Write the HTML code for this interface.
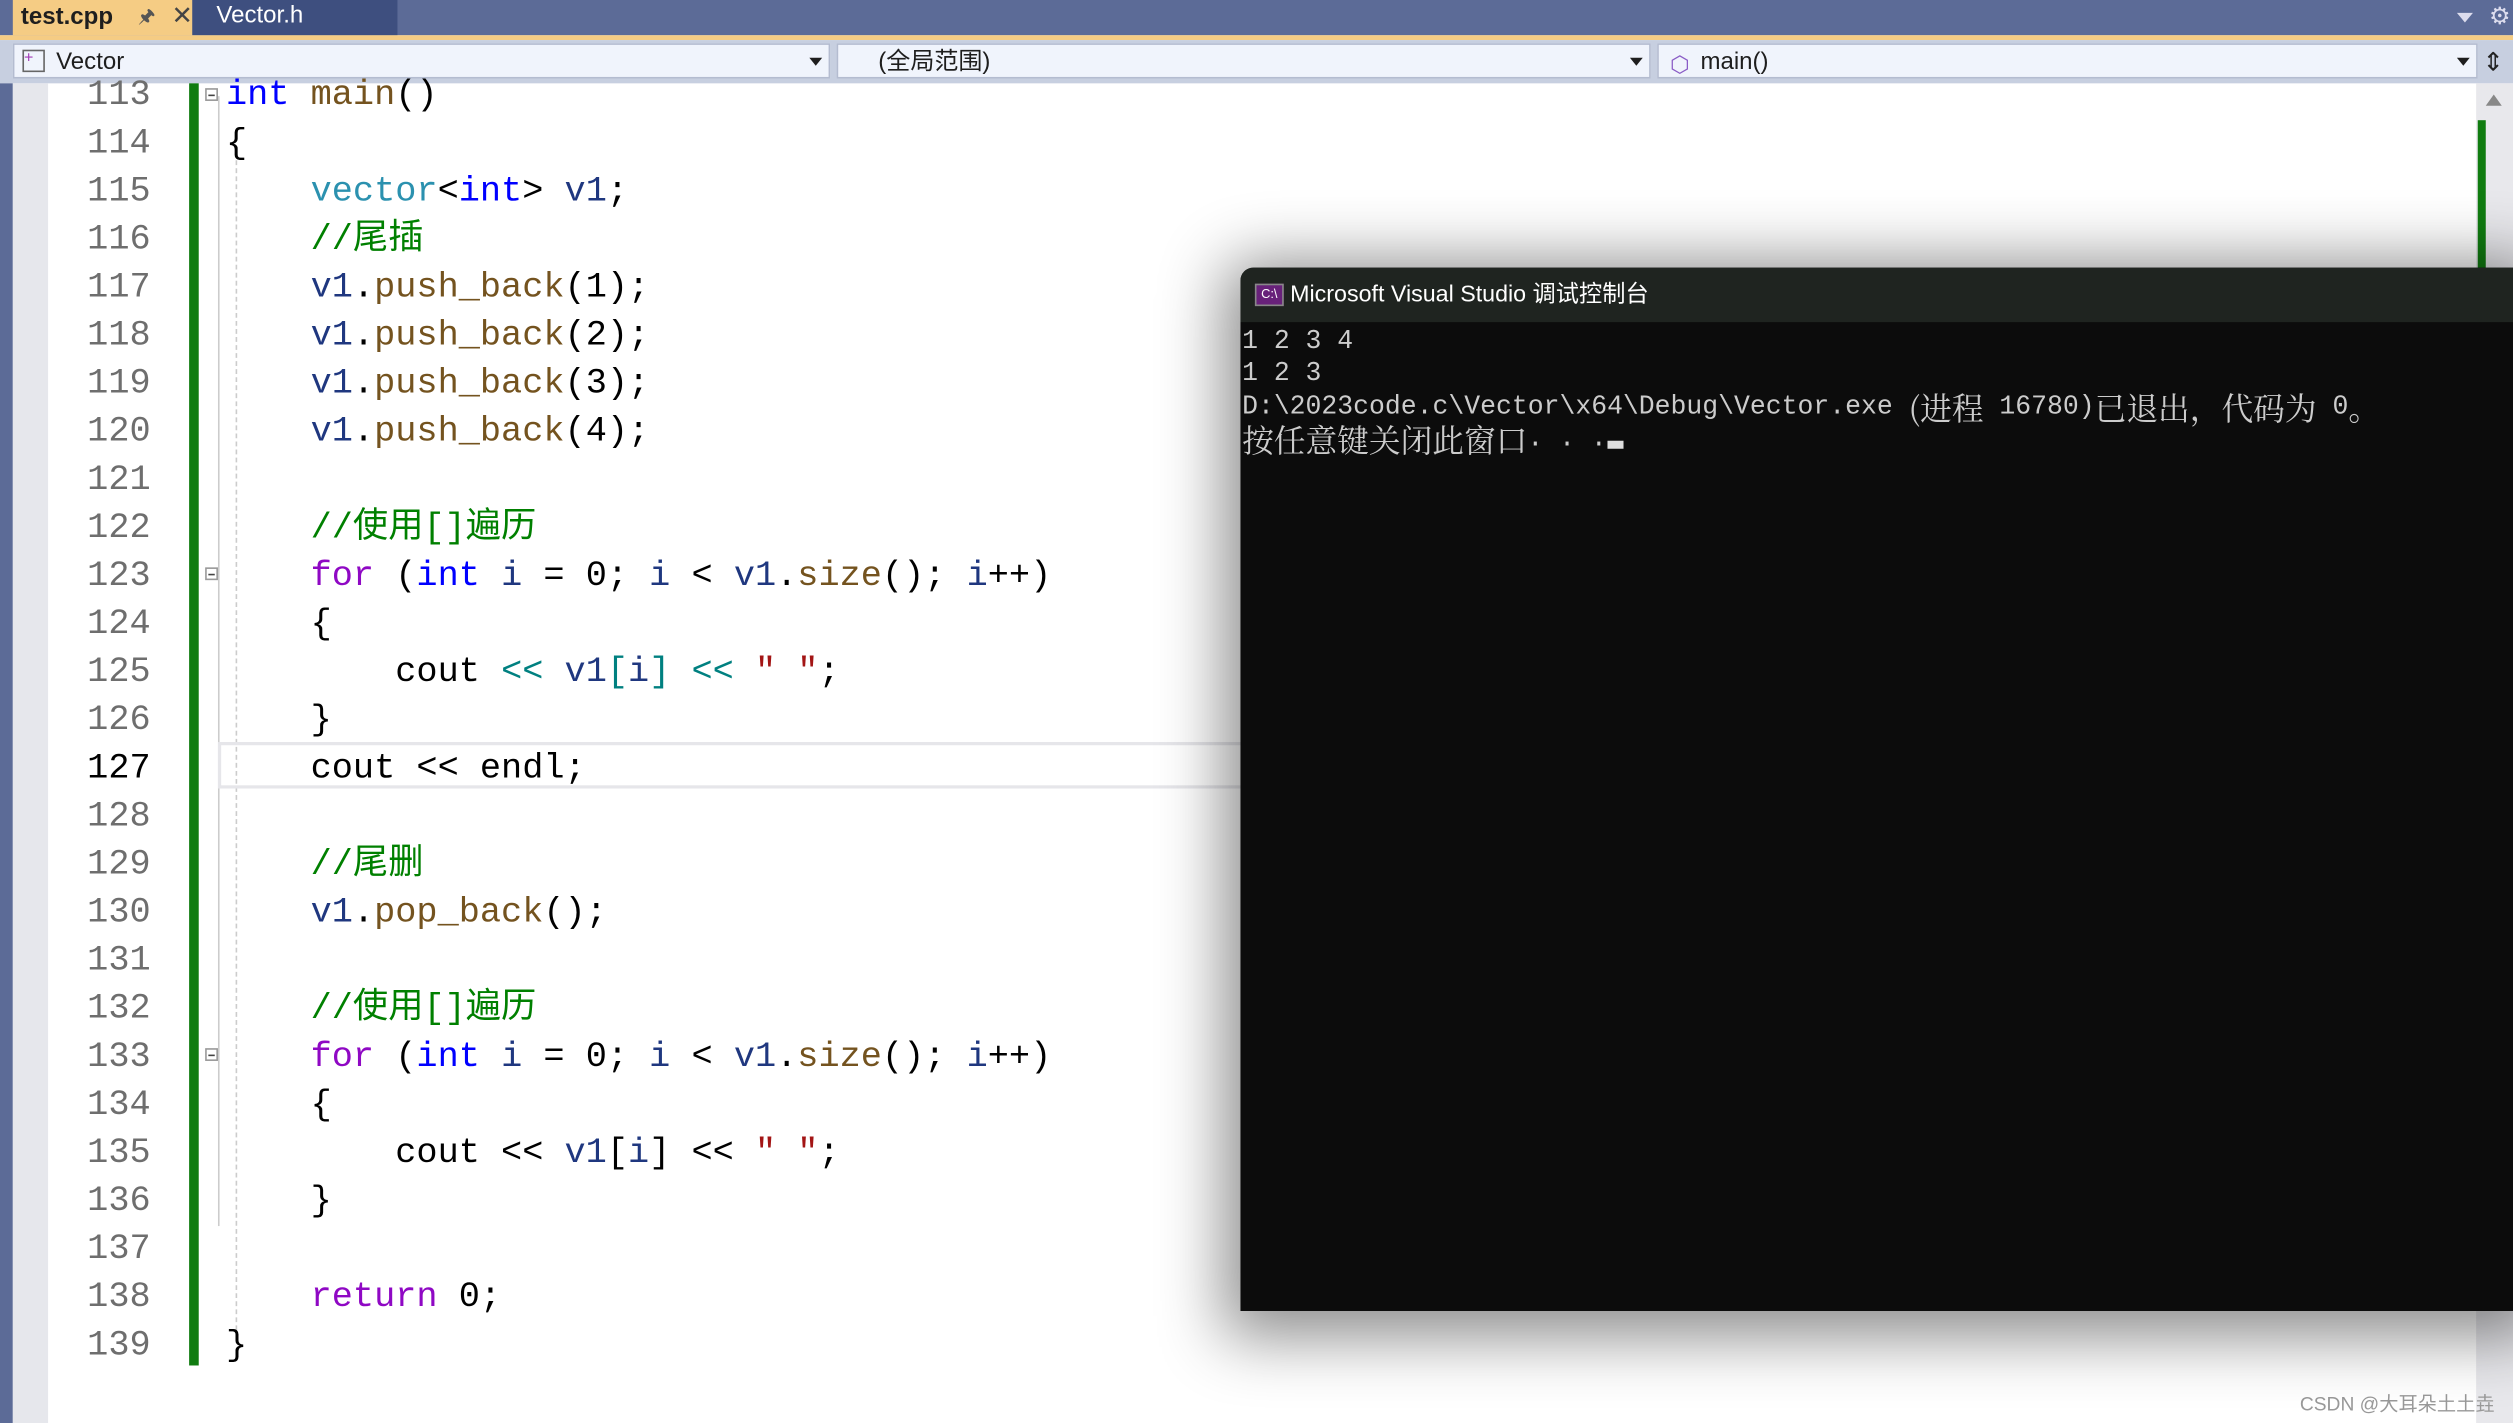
<!DOCTYPE html>
<html><head><meta charset="utf-8">
<style>
html,body{margin:0;padding:0;width:2513px;height:1423px;overflow:hidden;background:#fff}
#w{position:absolute;left:0;top:0;width:1568px;height:888px;transform:scale(1.60268);transform-origin:0 0;overflow:hidden;background:#fff;font-family:"Liberation Sans","Noto Sans CJK SC",sans-serif}
.abs{position:absolute}
#tabs{left:0;top:0;width:1568px;height:22px;background:#5c6b97}
#t1{left:8px;top:0;width:112px;height:22px;background:#f5cc84;font-weight:bold;font-size:15px;line-height:21px;color:#1e1e1e}
#t2{left:120px;top:0;width:128px;height:22px;background:#3e4f7f;color:#fff;font-size:15px;line-height:20px}
#oline{left:0;top:22px;width:1568px;height:3px;background:#f5cc84}
#tool{left:0;top:25px;width:1568px;height:27px;background:#c7cfe0}
.dd{position:absolute;top:27px;height:22px;background:#f0f4fc;border:1px solid #b4bcd0;box-sizing:border-box;font-size:15px;line-height:21px;color:#1e1e1e}
.arr{position:absolute;right:4px;top:8px;width:0;height:0;border-left:4px solid transparent;border-right:4px solid transparent;border-top:5px solid #1e1e1e}
#lstrip{left:0;top:52px;width:8px;height:836px;background:#5c6b97}
#gm{left:8px;top:52px;width:22px;height:836px;background:#e6e7ec}
#green{left:118px;top:52px;width:6px;height:800px;background:#107c10}
#vs{left:1545px;top:52px;width:23px;height:836px;background:#e8e8ec}
.ln{position:absolute;left:30px;width:64px;text-align:right;font-family:"Liberation Mono",monospace;font-size:22px;color:#6e6e6e;line-height:30px;margin-top:1px}
.cd{position:absolute;left:141px;white-space:pre;font-family:"Liberation Mono","Noto Sans CJK SC",monospace;font-size:22px;line-height:30px;color:#000;margin-top:1px}
.k{color:#0000ff}.p{color:#8f08c4}.t{color:#2b91af}.v{color:#1f377f}.f{color:#74531f}.c{color:#008000}.s{color:#a31515}.o{color:#008080}
.fold{position:absolute;left:128px;width:8px;height:8px;border:1px solid #999;background:#fff;box-sizing:border-box}
.fold:after{content:"";position:absolute;left:1px;top:3px;width:4px;height:1px;background:#444}
#con{left:774px;top:167px;width:800px;height:651px;background:#0c0c0c;border-radius:8px 0 0 0;box-shadow:0 6px 40px 10px rgba(0,0,0,.45);overflow:hidden}
#ctitle{left:0;top:0;width:800px;height:34px;background:#1f2420;color:#fff;font-size:14.5px;line-height:34px}
.cl{position:absolute;left:1px;white-space:pre;font-family:"Liberation Mono",monospace;font-size:16.5px;color:#cccccc;line-height:20px;height:20px}
.z{font-family:"Noto Serif CJK SC","Noto Sans CJK SC",serif;font-size:19.8px;line-height:20px;vertical-align:top}
</style></head><body><div id="w">
<div id="tabs" class="abs"></div>
<div id="t1" class="abs"><span style="position:absolute;left:5px">test.cpp</span><span style="position:absolute;left:78px;font-weight:normal;font-size:12px;color:#555">&#x1F588;</span><span style="position:absolute;left:99px;font-weight:normal;font-size:16px;color:#444">✕</span></div>
<div id="t2" class="abs"><span style="position:absolute;left:15px">Vector.h</span></div>
<div class="abs" style="left:1533px;top:8px;border-left:5px solid transparent;border-right:5px solid transparent;border-top:6px solid #dde;width:0;height:0"></div>
<div class="abs" style="left:1553px;top:1px;color:#dde;font-size:15px">⚙</div>
<div id="oline" class="abs"></div>
<div id="tool" class="abs"></div>
<div class="dd" style="left:8px;width:510px"><span style="position:absolute;left:5px;top:3px;width:14px;height:14px;border:1px solid #666;box-sizing:border-box;color:#a23bb5;font-size:10px;line-height:10px">+</span><span style="position:absolute;left:26px">Vector</span><div class="arr"></div></div>
<div class="dd" style="left:522px;width:508px"><span style="position:absolute;left:25px">(全局范围)</span><div class="arr"></div></div>
<div class="dd" style="left:1034px;width:512px"><span style="position:absolute;left:7px;top:2px;color:#8a5cc6;font-size:14px">⬡</span><span style="position:absolute;left:26px">main()</span><div class="arr"></div></div>
<div class="abs" style="left:1549px;top:29px;font-size:16px;color:#222">⇕</div>
<div id="lstrip" class="abs"></div>
<div id="gm" class="abs"></div>
<div id="green" class="abs"></div>
<div class="abs" style="left:136px;top:60px;width:1px;height:705px;background:#ccc"></div>
<div class="abs" style="left:147px;top:100px;width:0;height:735px;border-left:1px dashed #ccc"></div>
<div class="abs" style="left:136px;top:463px;width:640px;height:29px;border:2px solid #e6e6ea;box-sizing:border-box"></div>
<div id="vs" class="abs"><div class="abs" style="left:6px;top:7px;border-left:5px solid transparent;border-right:5px solid transparent;border-bottom:7px solid #888;width:0;height:0"></div><div class="abs" style="left:1px;top:23px;width:5px;height:93px;background:#107c10"></div></div>
<div class="fold" style="top:55px"></div><div class="fold" style="top:354px"></div><div class="fold" style="top:654px"></div>

<div class="ln" style="top:44px">113</div><div class="ln" style="top:74px">114</div><div class="ln" style="top:104px">115</div><div class="ln" style="top:134px">116</div><div class="ln" style="top:164px">117</div><div class="ln" style="top:194px">118</div><div class="ln" style="top:224px">119</div><div class="ln" style="top:254px">120</div><div class="ln" style="top:284px">121</div><div class="ln" style="top:314px">122</div><div class="ln" style="top:344px">123</div><div class="ln" style="top:374px">124</div><div class="ln" style="top:404px">125</div><div class="ln" style="top:434px">126</div><div class="ln" style="top:464px;color:#000">127</div><div class="ln" style="top:494px">128</div><div class="ln" style="top:524px">129</div><div class="ln" style="top:554px">130</div><div class="ln" style="top:584px">131</div><div class="ln" style="top:614px">132</div><div class="ln" style="top:644px">133</div><div class="ln" style="top:674px">134</div><div class="ln" style="top:704px">135</div><div class="ln" style="top:734px">136</div><div class="ln" style="top:764px">137</div><div class="ln" style="top:794px">138</div><div class="ln" style="top:824px">139</div>

<div class="cd" style="top:44px"><span class="k">int</span> <span class="f">main</span>()</div>
<div class="cd" style="top:74px">{</div>
<div class="cd" style="top:104px">    <span class="t">vector</span>&lt;<span class="k">int</span>&gt; <span class="v">v1</span>;</div>
<div class="cd" style="top:134px">    <span class="c">//尾插</span></div>
<div class="cd" style="top:164px">    <span class="v">v1</span>.<span class="f">push_back</span>(1);</div>
<div class="cd" style="top:194px">    <span class="v">v1</span>.<span class="f">push_back</span>(2);</div>
<div class="cd" style="top:224px">    <span class="v">v1</span>.<span class="f">push_back</span>(3);</div>
<div class="cd" style="top:254px">    <span class="v">v1</span>.<span class="f">push_back</span>(4);</div>
<div class="cd" style="top:314px">    <span class="c">//使用[]遍历</span></div>
<div class="cd" style="top:344px">    <span class="p">for</span> (<span class="k">int</span> <span class="v">i</span> = 0; <span class="v">i</span> &lt; <span class="v">v1</span>.<span class="f">size</span>(); <span class="v">i</span>++)</div>
<div class="cd" style="top:374px">    {</div>
<div class="cd" style="top:404px">        cout <span class="o">&lt;&lt;</span> <span class="v">v1</span><span class="o">[</span><span class="v">i</span><span class="o">]</span> <span class="o">&lt;&lt;</span> <span class="s">" "</span>;</div>
<div class="cd" style="top:434px">    }</div>
<div class="cd" style="top:464px">    cout &lt;&lt; endl;</div>
<div class="cd" style="top:524px">    <span class="c">//尾删</span></div>
<div class="cd" style="top:554px">    <span class="v">v1</span>.<span class="f">pop_back</span>();</div>
<div class="cd" style="top:614px">    <span class="c">//使用[]遍历</span></div>
<div class="cd" style="top:644px">    <span class="p">for</span> (<span class="k">int</span> <span class="v">i</span> = 0; <span class="v">i</span> &lt; <span class="v">v1</span>.<span class="f">size</span>(); <span class="v">i</span>++)</div>
<div class="cd" style="top:674px">    {</div>
<div class="cd" style="top:704px">        cout &lt;&lt; <span class="v">v1</span>[<span class="v">i</span>] &lt;&lt; <span class="s">" "</span>;</div>
<div class="cd" style="top:734px">    }</div>
<div class="cd" style="top:794px">    <span class="p">return</span> 0;</div>
<div class="cd" style="top:824px">}</div>

<div class="abs" style="left:1435px;top:867px;font-size:12px;color:#999">CSDN @大耳朵土土垚</div>

<div id="con" class="abs">
<div id="ctitle" class="abs"><span style="position:absolute;left:9px;top:10px;width:18px;height:14px;background:#68217a;border:1px solid #888;box-sizing:border-box;font-size:8px;line-height:12px;color:#fff;text-align:center">C:\</span><span style="position:absolute;left:31px">Microsoft Visual Studio 调试控制台</span></div>
<div class="cl" style="top:36px">1 2 3 4</div>
<div class="cl" style="top:56px">1 2 3</div>
<div class="cl" style="top:77px">D:\2023code.c\Vector\x64\Debug\Vector.exe <span class="z">(进程</span> 16780)<span class="z">已退出，代码为</span> 0<span class="z">。</span></div>
<div class="cl" style="top:97px"><span class="z">按任意键关闭此窗口</span>. . .<span style="display:inline-block;width:10px;height:5px;background:#ddd;vertical-align:-2px"></span></div>
</div>
</div></body></html>
